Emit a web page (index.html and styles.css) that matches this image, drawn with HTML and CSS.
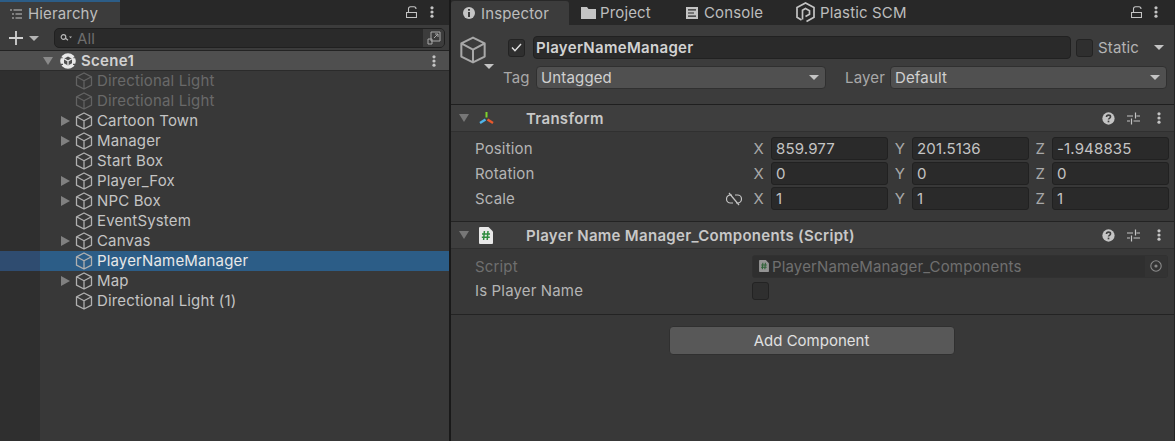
FILE: index.html
```html
<!DOCTYPE html>
<html>
  <head>
    <meta name="viewport" content="width=device-width, initial-scale=1">
    <link rel="stylesheet" href="styles.css">
  </head>
  <body>
    <svg class="defs" width="0" height="0">
      <symbol id="cube" viewBox="0 0 18 18">
        <path d="M9 1 16.5 4.8V13.2L9 17 1.5 13.2V4.8ZM1.5 4.8 9 8.8 16.5 4.8M9 8.8V17" fill="none" stroke="currentColor" stroke-width="1.3" stroke-linejoin="round"/>
      </symbol>
      <symbol id="lock" viewBox="0 0 11 12">
        <path d="M.5 6.5H10.5V11.5H.5ZM2.5 6.5V3Q2.5 .8 4.5 .8H8Q10 .8 10 3" fill="none" stroke="currentColor" stroke-width="1.1"/>
      </symbol>
      <symbol id="dots" viewBox="0 0 4 12">
        <circle cx="2" cy="1.8" r="1.6" fill="currentColor"/><circle cx="2" cy="6" r="1.6" fill="currentColor"/><circle cx="2" cy="10.2" r="1.6" fill="currentColor"/>
      </symbol>
      <symbol id="help" viewBox="0 0 14 14">
        <circle cx="7" cy="7" r="6.6" fill="#c4c4c4"/>
        <path d="M4.8 5.4Q4.9 3.4 7 3.4 9.2 3.4 9.2 5.1 9.2 6.1 8 6.8 7 7.4 7 8.2" fill="none" stroke="#3e3e3e" stroke-width="1.7"/>
        <rect x="6.1" y="9.3" width="1.8" height="1.8" fill="#3e3e3e"/>
      </symbol>
      <symbol id="presets" viewBox="0 0 13 13">
        <path d="M0 4H6M9.5 4H13M0 9H3M6.5 9H13M8.5 .5V6.5M4.5 6.5V12.5" fill="none" stroke="#c4c4c4" stroke-width="1.2"/>
      </symbol>
      <symbol id="unlink" viewBox="0 0 16 14">
        <path d="M6 3H4.5A4 4 0 0 0 4.5 11H7M9 3H11.5A4 4 0 0 1 11.5 11H10M3 1 13 13" fill="none" stroke="#c4c4c4" stroke-width="1.2"/>
      </symbol>
      <symbol id="script" viewBox="0 0 14 17">
        <path d="M0 1Q0 0 1 0H9.5L14 4.5V16Q14 17 13 17H1Q0 17 0 16Z" fill="#e8e8e8"/>
        <path d="M5.4 4 4.6 13M9 4 8.2 13M3 7H11M2.8 10.2H10.8" fill="none" stroke="#2e8b3e" stroke-width="1.5"/>
      </symbol>
    </svg>

    <div class="window">
      <!-- left panel -->
      <section class="hierarchy">
        <div class="tabbar">
          <div class="tab tab-hierarchy">
            <svg class="tab-icon" viewBox="0 0 14 12" width="14" height="12"><path d="M4.5 2H13M6.5 6H13M6.5 10H13M1 2H3M3 6H5M3 10H5" fill="none" stroke="#c4c4c4" stroke-width="1.1"/></svg>
            Hierarchy
          </div>
          <div class="tab-tools">
            <svg class="lock" width="11" height="12"><use href="#lock"/></svg>
            <svg class="dots" width="4" height="12"><use href="#dots"/></svg>
          </div>
        </div>
        <div class="toolbar">
          <svg class="plus" viewBox="0 0 16 16" width="16" height="16"><path d="M8 1V15M1 8H15" stroke="#d2d2d2" stroke-width="1.8"/></svg>
          <span class="caret caret-plus"></span>
          <div class="search">
            <svg class="search-icon" viewBox="0 0 12 10" width="12" height="10"><circle cx="3.5" cy="4" r="2.3" fill="none" stroke="#b8b8b8" stroke-width="1.2"/><path d="M5.5 5.2 8 7.2" stroke="#b8b8b8" stroke-width="1.3"/><path d="M9 3.5H12L10.5 5.2Z" fill="#b8b8b8"/></svg>
            <span class="search-text">All</span>
            <span class="search-btn">
              <svg viewBox="0 0 14 14" width="14" height="14"><path d="M4 1H13V10H4ZM1 8H5V13H1ZM7 7 11 3M8 3H11V6" fill="none" stroke="#a8a8a8" stroke-width="1"/></svg>
            </span>
          </div>
        </div>
        <div class="scene-row">
          <span class="arrow-down"></span>
          <svg class="scene-icon" viewBox="0 0 16 16" width="16" height="16"><circle cx="8" cy="8" r="7.8" fill="#e8e8e8"/><path d="M8 3.6 12 5.8V10.2L8 12.4 4 10.2V5.8Z" fill="#4f4f4f"/><path d="M4 5.8 8 8 12 5.8M8 8V12.4" stroke="#e8e8e8" stroke-width="1.3" fill="none"/><path d="M0 4.8H2.6M13.4 4.8H16M0 11.4H3M13 11.4H16" stroke="#4f4f4f" stroke-width="1.1"/></svg>
          <span class="scene-name">Scene1</span>
          <svg class="dots scene-dots" width="4" height="12"><use href="#dots"/></svg>
        </div>
        <div class="tree">
          <div class="tree-row off"><span class="fold"></span><svg class="cube" width="18" height="18"><use href="#cube"/></svg>Directional Light</div>
          <div class="tree-row off"><span class="fold"></span><svg class="cube" width="18" height="18"><use href="#cube"/></svg>Directional Light</div>
          <div class="tree-row"><span class="fold closed"></span><svg class="cube" width="18" height="18"><use href="#cube"/></svg>Cartoon Town</div>
          <div class="tree-row"><span class="fold closed"></span><svg class="cube" width="18" height="18"><use href="#cube"/></svg>Manager</div>
          <div class="tree-row"><span class="fold"></span><svg class="cube" width="18" height="18"><use href="#cube"/></svg>Start Box</div>
          <div class="tree-row"><span class="fold closed"></span><svg class="cube" width="18" height="18"><use href="#cube"/></svg>Player_Fox</div>
          <div class="tree-row"><span class="fold closed"></span><svg class="cube" width="18" height="18"><use href="#cube"/></svg>NPC Box</div>
          <div class="tree-row"><span class="fold"></span><svg class="cube" width="18" height="18"><use href="#cube"/></svg>EventSystem</div>
          <div class="tree-row"><span class="fold closed"></span><svg class="cube" width="18" height="18"><use href="#cube"/></svg>Canvas</div>
          <div class="tree-row selected"><span class="fold"></span><svg class="cube" width="18" height="18"><use href="#cube"/></svg>PlayerNameManager</div>
          <div class="tree-row"><span class="fold closed"></span><svg class="cube" width="18" height="18"><use href="#cube"/></svg>Map</div>
          <div class="tree-row"><span class="fold"></span><svg class="cube" width="18" height="18"><use href="#cube"/></svg>Directional Light (1)</div>
        </div>
      </section>

      <!-- right panel -->
      <section class="inspector">
        <div class="tabbar">
          <div class="tab tab-inspector">
            <svg class="tab-icon" viewBox="0 0 12 12" width="12" height="12"><circle cx="6" cy="6" r="6" fill="#c4c4c4"/><path d="M6 5V10M6 2V3.8" stroke="#3c3c3c" stroke-width="2"/></svg>
            Inspector
          </div>
          <div class="tab tab-project">
            <svg class="tab-icon" viewBox="0 0 15 12" width="15" height="12"><path d="M0 0H6L7.5 2H15V12H0Z" fill="#c4c4c4"/></svg>
            Project
          </div>
          <div class="tab tab-console">
            <svg class="tab-icon" viewBox="0 0 12 12" width="12" height="12"><path d="M0 0H12V12H0Z" fill="#c4c4c4"/><path d="M2 2.8H10M2 6H8M2 9.2H10" stroke="#282828" stroke-width="1.2"/></svg>
            Console
          </div>
          <div class="tab tab-plastic">
            <svg class="tab-icon" viewBox="0 0 19 21" width="19" height="21"><path d="M5.5 18 1 15.3V5.5L9.5 1 18 5.5V15.3L10.5 19.6" fill="none" stroke="#c4c4c4" stroke-width="1.7"/><path d="M6.5 17.5V8.3L9.5 6.5 13.5 8.8V12.3L9.5 14.5" fill="none" stroke="#c4c4c4" stroke-width="1.7"/></svg>
            Plastic SCM
          </div>
          <div class="tab-tools tools-inspector">
            <svg class="lock" width="11" height="12"><use href="#lock"/></svg>
            <svg class="dots" width="4" height="12"><use href="#dots"/></svg>
          </div>
        </div>

        <div class="object-head">
          <div class="object-icon">
            <svg class="big-cube" width="28" height="28" viewBox="0 0 18 18"><use href="#cube"/></svg>
            <span class="caret object-caret"></span>
          </div>
          <div class="object-fields">
            <div class="name-line">
              <span class="check on">
                <svg viewBox="0 0 12 10" width="11" height="9"><path d="M1 5 4.3 8.5 11 1" fill="none" stroke="#e0e0e0" stroke-width="1.6"/></svg>
              </span>
              <div class="name-input">PlayerNameManager</div>
              <span class="check"></span>
              <span class="static-label">Static</span>
              <span class="caret static-caret"></span>
            </div>
            <div class="tag-line">
              <span class="tag-label">Tag</span>
              <div class="dropdown tag-drop">Untagged<span class="caret"></span></div>
              <span class="layer-label">Layer</span>
              <div class="dropdown layer-drop">Default<span class="caret"></span></div>
            </div>
          </div>
        </div>

        <div class="comp-head">
          <span class="arrow-down small"></span>
          <svg class="comp-icon" viewBox="0 0 17 15" width="17" height="15"><path d="M8.5 1V6.5" stroke="#7fd32b" stroke-width="2"/><path d="M7.5 8.5 2 12" stroke="#4fb4ea" stroke-width="2.4"/><path d="M9.5 8.5 15 12" stroke="#e8582c" stroke-width="2.4"/></svg>
          <span class="comp-title">Transform</span>
          <div class="comp-tools">
            <svg width="13" height="13" viewBox="0 0 14 14"><use href="#help"/></svg>
            <svg width="13" height="13"><use href="#presets"/></svg>
            <svg class="comp-dots" width="4" height="12"><use href="#dots"/></svg>
          </div>
        </div>
        <div class="comp-body transform-body">
          <div class="vec-row">
            <span class="prop">Position</span>
            <div class="vec">
              <span class="axis">X</span><div class="field">859.977</div>
              <span class="axis">Y</span><div class="field">201.5136</div>
              <span class="axis">Z</span><div class="field">-1.948835</div>
            </div>
          </div>
          <div class="vec-row">
            <span class="prop">Rotation</span>
            <div class="vec">
              <span class="axis">X</span><div class="field">0</div>
              <span class="axis">Y</span><div class="field">0</div>
              <span class="axis">Z</span><div class="field">0</div>
            </div>
          </div>
          <div class="vec-row">
            <span class="prop">Scale</span>
            <svg class="unlink" width="16" height="14"><use href="#unlink"/></svg>
            <div class="vec">
              <span class="axis">X</span><div class="field">1</div>
              <span class="axis">Y</span><div class="field">1</div>
              <span class="axis">Z</span><div class="field">1</div>
            </div>
          </div>
        </div>

        <div class="comp-head">
          <span class="arrow-down small"></span>
          <svg class="comp-icon script-icon" width="14" height="17"><use href="#script"/></svg>
          <span class="comp-title">Player Name Manager_Components (Script)</span>
          <div class="comp-tools">
            <svg width="13" height="13" viewBox="0 0 14 14"><use href="#help"/></svg>
            <svg width="13" height="13"><use href="#presets"/></svg>
            <svg class="comp-dots" width="4" height="12"><use href="#dots"/></svg>
          </div>
        </div>
        <div class="comp-body script-body">
          <div class="script-row">
            <span class="prop off">Script</span>
            <div class="object-field">
              <svg class="mini-script" width="10" height="12" viewBox="0 0 14 17"><use href="#script"/></svg>
              <span>PlayerNameManager_Components</span>
              <span class="picker"><svg viewBox="0 0 12 12" width="12" height="12"><circle cx="6" cy="6" r="5.2" fill="none" stroke="#8a8a8a" stroke-width="1.1"/><circle cx="6" cy="6" r="1.6" fill="#8a8a8a"/></svg></span>
            </div>
          </div>
          <div class="bool-row">
            <span class="prop">Is Player Name</span>
            <span class="check"></span>
          </div>
        </div>

        <div class="add-wrap">
          <div class="add-btn">Add Component</div>
        </div>
      </section>
    </div>
  </body>
</html>
```

FILE: styles.css
```css
* {
  box-sizing: border-box;
}

html, body {
  margin: 0;
  height: 100%;
  overflow: hidden;
}

body {
  background: #383838;
  color: #c4c4c4;
  font-family: "Inter", "Liberation Sans", sans-serif;
  font-size: 15px;
  letter-spacing: .15px;
}

.defs {
  position: absolute;
}

svg {
  display: block;
  flex: none;
}

.window {
  display: flex;
  height: 441px;
  background: #191919;
}

.hierarchy {
  width: 449px;
  display: flex;
  flex-direction: column;
  margin-right: 2px;
}

.inspector {
  flex: 1;
  display: flex;
  flex-direction: column;
  background: #383838;
  border-right: 1px solid #232323;
}

/* tabs */
.tabbar {
  height: 25px;
  display: flex;
  align-items: stretch;
  background: #282828;
  flex: none;
}

.tab {
  display: flex;
  align-items: center;
  color: #bdbdbd;
}

.tab-hierarchy {
  width: 120px;
  padding: 0 0 0 9px;
  gap: 5px;
  background: #3c3c3c;
  border-top: 2px solid #2c5d87;
}

.tab-inspector {
  width: 118px;
  padding: 0 0 0 12px;
  gap: 6px;
  background: #3c3c3c;
  border-radius: 3px 3px 0 0;
  margin-top: 1px;
}

.tab-project {
  width: 111px;
  padding-left: 12px;
  gap: 4px;
}

.tab-console {
  width: 116px;
  padding-left: 6px;
  gap: 6px;
}

.tab-plastic {
  gap: 5px;
}

.tab-tools {
  margin-left: auto;
  display: flex;
  align-items: center;
  gap: 13px;
  padding: 0 15px 2px 0;
  color: #c4c4c4;
}

.tools-inspector {
  gap: 12px;
  padding-right: 16px;
}

/* hierarchy toolbar */
.toolbar {
  height: 25px;
  display: flex;
  align-items: center;
  padding-top: 1px;
  background: #3c3c3c;
  flex: none;
}

.plus {
  margin-left: 8px;
}

.caret {
  width: 0;
  height: 0;
  border-left: 5px solid transparent;
  border-right: 5px solid transparent;
  border-top: 5px solid #c4c4c4;
  flex: none;
}

.caret-plus {
  margin: 0 0 0 5px;
  border-top-color: #b4b4b4;
}

.search {
  margin-left: 15px;
  width: 391px;
  height: 20px;
  display: flex;
  align-items: center;
  background: #2a2a2a;
  border: 1px solid #202020;
  border-radius: 5px;
}

.search-icon {
  margin-left: 5px;
}

.search-text {
  margin-left: 5px;
  color: #6e6e6e;
}

.search-btn {
  margin-left: auto;
  width: 21px;
  height: 18px;
  display: flex;
  align-items: center;
  justify-content: center;
  background: #3c3c3c;
  border-radius: 0 4px 4px 0;
}

/* tree */
.scene-row {
  height: 21px;
  display: flex;
  align-items: center;
  background: #4f4f4f;
  border-top: 1px solid #232323;
  border-bottom: 1px solid #2b2b2b;
  flex: none;
}

.arrow-down {
  width: 0;
  height: 0;
  border-left: 5px solid transparent;
  border-right: 5px solid transparent;
  border-top: 8px solid #8a8a8a;
  margin-left: 43px;
  flex: none;
}

.arrow-down.small {
  margin-left: 8px;
  border-top-color: #777;
}

.scene-icon {
  margin-left: 7px;
}

.scene-name {
  margin-left: 5px;
  font-weight: 600;
  letter-spacing: .3px;
  color: #d2d2d2;
}

.scene-dots {
  margin-left: auto;
  margin-right: 13px;
  color: #c4c4c4;
}

.tree {
  flex: 1;
  background: linear-gradient(to right, #2f2f2f 40px, #383838 40px);
}

.tree-row {
  height: 20px;
  display: flex;
  align-items: center;
  padding-bottom: 1px;
  color: #c4c4c4;
}

.tree-row.off {
  color: #696969;
}

.tree-row .cube {
  margin: 1px 4px 0 0;
  color: #b0b0b0;
}

.tree-row.off .cube {
  color: #626262;
}

.tree-row.selected {
  color: #e8e8e8;
  background: linear-gradient(to right, #2f4c70 40px, #2c5d87 40px);
}

.fold {
  width: 10px;
  height: 10px;
  margin: 0 4px 0 61px;
  flex: none;
}

.fold.closed {
  border-top: 5px solid transparent;
  border-bottom: 5px solid transparent;
  border-left: 9px solid #808080;
}

/* object header */
.object-head {
  height: 80px;
  display: flex;
  background: #3c3c3c;
  border-bottom: 1px solid #1f1f1f;
  flex: none;
}

.object-icon {
  width: 57px;
  padding: 11px 0 0 8px;
  color: #a8a8a8;
  position: relative;
}

.object-caret {
  position: absolute;
  left: 33px;
  top: 39px;
}

.object-fields {
  flex: 1;
  padding-top: 11px;
  display: flex;
  flex-direction: column;
  gap: 7px;
}

.name-line {
  display: flex;
  align-items: center;
  height: 23px;
}

.check {
  width: 17px;
  height: 18px;
  background: #2f2f2f;
  border: 1px solid #232323;
  border-radius: 3px;
  display: flex;
  align-items: center;
  justify-content: center;
  flex: none;
}

.name-input {
  width: 538px;
  height: 23px;
  margin: 0 5px 0 8px;
  padding-left: 2px;
  line-height: 22px;
  font-weight: 600;
  letter-spacing: .3px;
  color: #d2d2d2;
  background: #2a2a2a;
  border: 1px solid #212121;
  border-radius: 4px;
}

.static-label {
  margin-left: 5px;
  color: #b4b4b4;
}

.static-caret {
  margin-left: 15px;
}

.tag-line {
  display: flex;
  align-items: center;
  height: 23px;
  margin-left: -5px;
}

.tag-label, .layer-label {
  color: #a8a8a8;
}

.tag-label {
  width: 33px;
}

.layer-label {
  width: 45px;
  margin-left: 19px;
}

.dropdown {
  height: 23px;
  display: flex;
  align-items: center;
  justify-content: space-between;
  padding: 0 6px 1px 4px;
  background: #505050;
  border: 1px solid #303030;
  border-radius: 4px;
  color: #d0d0d0;
}

.tag-drop {
  width: 290px;
}

.layer-drop {
  width: 277px;
}

/* components */
.comp-head {
  height: 27px;
  display: flex;
  align-items: center;
  background: #3e3e3e;
  border-bottom: 1px solid #303030;
  flex: none;
}

.comp-icon {
  margin-left: 9px;
}

.script-icon {
  margin-left: 10px;
}

.comp-title {
  font-weight: 600;
  letter-spacing: .3px;
  color: #c8c8c8;
  margin-left: 31px;
}

.script-icon + .comp-title {
  margin-left: 33px;
}

.comp-tools {
  margin-left: auto;
  display: flex;
  align-items: center;
  gap: 12px;
  padding-right: 13px;
  color: #c4c4c4;
}

.comp-dots {
  margin-left: 5px;
}

.comp-body {
  flex: none;
  border-bottom: 1px solid #232323;
}

.transform-body {
  height: 90px;
  padding-top: 4px;
}

.vec-row {
  height: 25px;
  display: flex;
  align-items: center;
  padding: 0 5px 0 24px;
}

.prop {
  color: #b4b4b4;
}

.prop.off {
  color: #6f6f6f;
}

.unlink {
  margin-left: auto;
  margin-right: 11px;
}

.vec {
  margin-left: auto;
  width: 416px;
  display: grid;
  grid-template-columns: 18px 117px 24px 117px 23px 117px;
  align-items: center;
  color: #a8a8a8;
}

.unlink + .vec {
  margin-left: 0;
}

.axis {
  text-align: right;
  padding-right: 7px;
}

.field {
  height: 23px;
  line-height: 21px;
  padding-left: 4px;
  background: #2a2a2a;
  border: 1px solid #212121;
  border-radius: 3px;
  color: #c4c4c4;
}

.script-body {
  height: 66px;
  padding: 5px 6px 0 24px;
}

.script-row, .bool-row {
  display: flex;
  align-items: center;
  height: 25px;
}

.script-row {
  height: 24px;
}

.script-row .prop, .bool-row .prop {
  width: 277px;
}

.object-field {
  flex: 1;
  height: 23px;
  display: flex;
  align-items: center;
  padding-left: 6px;
  background: #2f2f2f;
  border: 1px solid #313131;
  border-radius: 3px;
  color: #6f6f6f;
  gap: 3px;
}

.mini-script {
  opacity: .55;
}

.picker {
  margin-left: auto;
  width: 22px;
  height: 21px;
  display: flex;
  align-items: center;
  justify-content: center;
  background: #333;
}

.add-wrap {
  display: flex;
  justify-content: center;
  padding: 11px 2px 0 0;
}

.add-btn {
  width: 286px;
  height: 29px;
  display: flex;
  align-items: center;
  justify-content: center;
  background: #585858;
  border: 1px solid #303030;
  border-radius: 4px;
  color: #e0e0e0;
  letter-spacing: 0;
}
```
